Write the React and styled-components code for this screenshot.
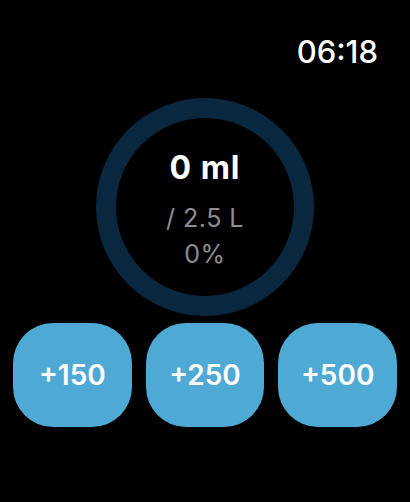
import React from "react";
import styled, { createGlobalStyle } from "styled-components";

const GlobalStyle = createGlobalStyle`
  html, body {
    margin: 0;
    padding: 0;
    background: #000;
  }
  body {
    font-family: Inter, "Liberation Sans", sans-serif;
  }
`;

const Screen = styled.div`
  width: 410px;
  height: 502px;
  background: #000;
  display: flex;
  flex-direction: column;
  overflow: hidden;
`;

const StatusBar = styled.div`
  display: flex;
  justify-content: flex-end;
  padding: 34px 32px 0 0;
`;

const Clock = styled.span`
  color: #fff;
  font-size: 31px;
  line-height: 36px;
  font-weight: 500;
`;

const Ring = styled.div`
  box-sizing: border-box;
  width: 218px;
  height: 218px;
  margin: 28px auto 0;
  border: 20px solid #0a2740;
  border-radius: 50%;
  display: flex;
  flex-direction: column;
  align-items: center;
  justify-content: center;
  padding-top: 4px;
`;

const Amount = styled.span`
  color: #fff;
  font-size: 32px;
  line-height: 36px;
  font-weight: 700;
  letter-spacing: 1px;
`;

const Sub = styled.span`
  color: #8d8d92;
  font-size: 25px;
  line-height: 30px;
  font-weight: 400;
  letter-spacing: 0.5px;
  margin-top: ${(p) => p.$gap}px;
`;

const Buttons = styled.div`
  display: flex;
  gap: 14px;
  padding: 0 13px;
  margin-top: 7px;
`;

const AddButton = styled.button`
  flex: 1;
  height: 104px;
  border: none;
  border-radius: 40px;
  background: #4fa9d5;
  color: #fff;
  font-family: Inter, "Liberation Sans", sans-serif;
  font-size: 28px;
  font-weight: 600;
  padding: 0;
  cursor: pointer;
`;

export default function App() {
  return (
    <>
      <GlobalStyle />
      <Screen>
        <StatusBar>
          <Clock>06:18</Clock>
        </StatusBar>
        <Ring>
          <Amount>0 ml</Amount>
          <Sub $gap={17}>/ 2.5 L</Sub>
          <Sub $gap={6}>0%</Sub>
        </Ring>
        <Buttons>
          {[150, 250, 500].map((v) => (
            <AddButton key={v}>+{v}</AddButton>
          ))}
        </Buttons>
      </Screen>
    </>
  );
}
